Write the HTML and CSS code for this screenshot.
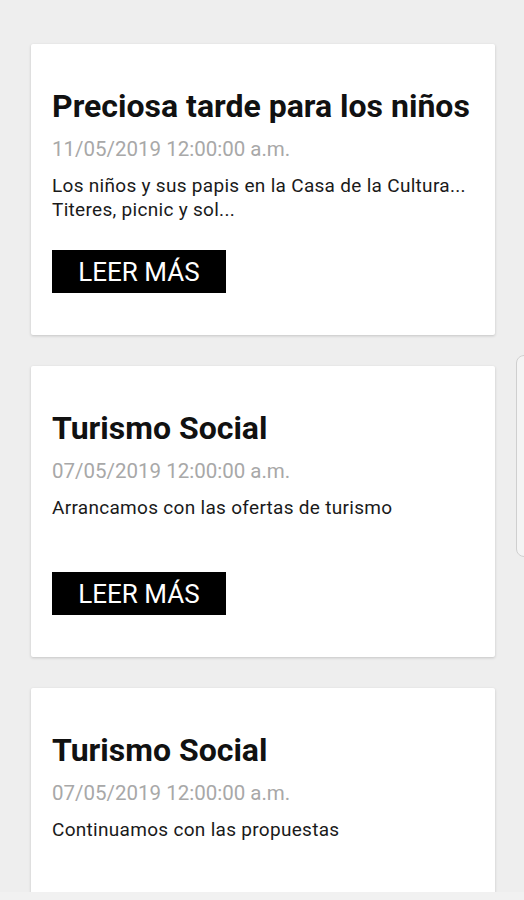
FILE: index.html
```html
<!DOCTYPE html>
<html lang="es">
<head>
<meta charset="utf-8">
<title>Noticias</title>
<link rel="stylesheet" href="styles.css">
</head>
<body>
<main class="feed">
  <article class="card">
    <h2 class="card-title">Preciosa tarde para los niños</h2>
    <p class="card-date">11/05/2019 12:00:00 a.m.</p>
    <p class="card-text">Los niños y sus papis en la Casa de la Cultura...<br>Titeres, picnic y sol...</p>
    <a class="card-btn" href="#">LEER MÁS</a>
  </article>
  <article class="card">
    <h2 class="card-title">Turismo Social</h2>
    <p class="card-date">07/05/2019 12:00:00 a.m.</p>
    <p class="card-text">Arrancamos con las ofertas de turismo</p>
    <a class="card-btn" href="#">LEER MÁS</a>
  </article>
  <article class="card">
    <h2 class="card-title">Turismo Social</h2>
    <p class="card-date">07/05/2019 12:00:00 a.m.</p>
    <p class="card-text">Continuamos con las propuestas</p>
    <a class="card-btn" href="#">LEER MÁS</a>
  </article>
</main>
<div class="edge-handle"></div>
<div class="bottom-strip"></div>
</body>
</html>
```

FILE: styles.css
```css
html, body {
  margin: 0;
  padding: 0;
}
body {
  background: #eeeeee;
  font-family: Roboto, "Noto Sans", sans-serif;
  color: #111;
  overflow: hidden;
  height: 900px;
}
.feed {
  display: flex;
  flex-direction: column;
  gap: 31px;
  padding: 44px 29px 0 31px;
}
.card {
  background: #ffffff;
  box-shadow: 0 1px 3px rgba(0, 0, 0, 0.18);
  border-radius: 2px;
  padding: 43px 21px 42px 21px;
  display: flex;
  flex-direction: column;
  align-items: flex-start;
}
.card-title {
  margin: 0;
  font-size: 32px;
  line-height: 38px;
  font-weight: 700;
  color: #111;
  white-space: nowrap;
}
.card-date {
  margin: 11px 0 0 0;
  font-size: 20.5px;
  line-height: 26px;
  color: #a8a8a8;
}
.card-text {
  margin: 12px 0 0 0;
  font-size: 19px;
  letter-spacing: 0.3px;
  line-height: 24px;
  min-height: 48px;
  color: #1a1a1a;
  white-space: nowrap;
}
.card-btn {
  margin-top: 28px;
  width: 174px;
  height: 43px;
  background: #000;
  color: #fff;
  text-decoration: none;
  font-size: 26px;
  display: flex;
  align-items: center;
  justify-content: center;
}
.edge-handle {
  position: fixed;
  right: -8px;
  top: 355px;
  width: 14px;
  height: 200px;
  border: 1px solid #cfcfcf;
  border-radius: 8px;
  background: #f4f4f4;
}
.bottom-strip {
  position: fixed;
  left: 0;
  right: 0;
  bottom: 0;
  height: 8px;
  background: #f1f1f1;
}
```
